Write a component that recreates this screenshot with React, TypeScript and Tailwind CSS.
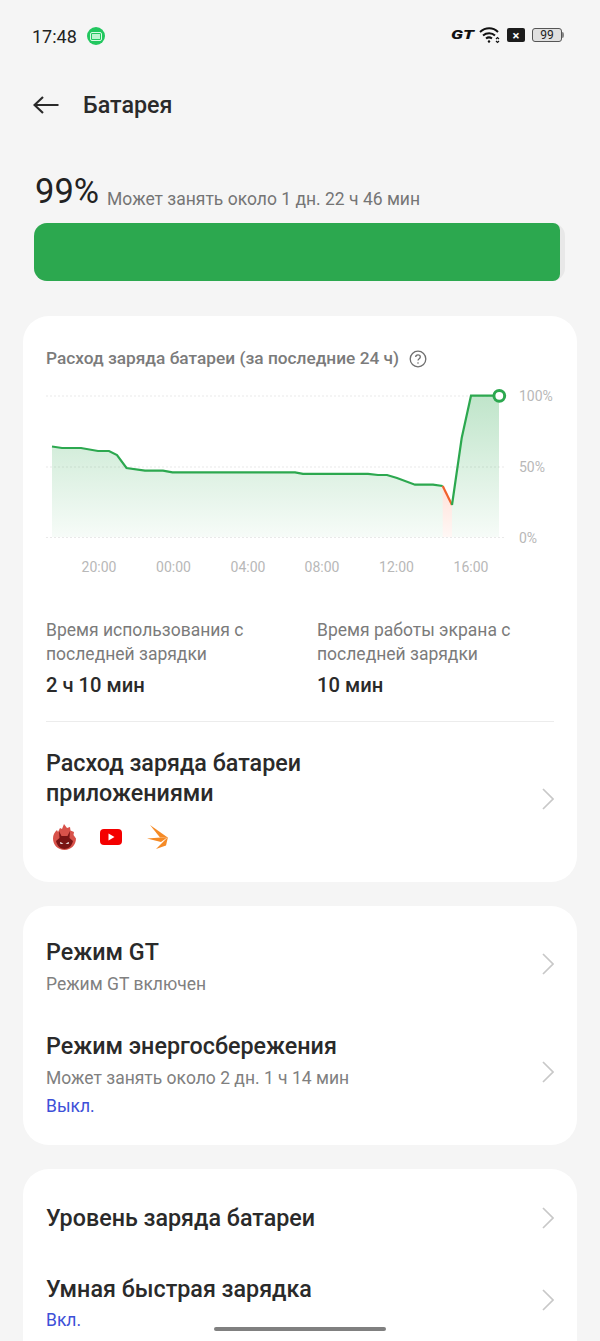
const lineGreen1 =
  "52,446.5 62,448 81,448 98,451 109,451 117,455 126.5,468 145,470.7 163,470.7 172.5,472.3 295,472.3 303,473.8 368,473.8 378,475 387,475 397,478 415,484.7 433,484.7 442.7,486";
const lineGreen2 = "452,505 461.7,438 471,395.7 499,395.7";

function Chevron({ className }: { className?: string }) {
  return (
    <svg width="12" height="22" viewBox="0 0 12 22" fill="none" stroke="#c8c8c8" strokeWidth="1.7" className={`shrink-0 ${className ?? ""}`}>
      <path d="M1 1l10 10L1 21" />
    </svg>
  );
}

function Chart() {
  return (
    <svg width="510" height="190" viewBox="46 385 510 190" className="block">
      <defs>
        <linearGradient id="fill" x1="0" y1="396" x2="0" y2="537" gradientUnits="userSpaceOnUse">
          <stop offset="0" stopColor="#2ca84f" stopOpacity="0.3" />
          <stop offset="1" stopColor="#2ca84f" stopOpacity="0.04" />
        </linearGradient>
        <linearGradient id="red" x1="0" y1="486" x2="0" y2="537" gradientUnits="userSpaceOnUse">
          <stop offset="0" stopColor="#ff6a3d" stopOpacity="0.2" />
          <stop offset="1" stopColor="#ff6a3d" stopOpacity="0.05" />
        </linearGradient>
      </defs>
      {[396, 467, 537.5].map((y) => (
        <line key={y} x1="46" x2="506" y1={y} y2={y} stroke="#e9e9e9" strokeDasharray="2 2" />
      ))}
      <polygon points={`${lineGreen1} 442.7,537 52,537`} fill="url(#fill)" />
      <polygon points="442.7,486 452,505 452,537 442.7,537" fill="url(#red)" />
      <polygon points={`${lineGreen2} 499,537 452,537`} fill="url(#fill)" />
      <polyline points={lineGreen1} fill="none" stroke="#2ca84f" strokeWidth="2.2" />
      <polyline points="442.7,486 452,505" fill="none" stroke="#f0622d" strokeWidth="2.2" />
      <polyline points={lineGreen2} fill="none" stroke="#2ca84f" strokeWidth="2.2" />
      <circle cx="499.3" cy="395.8" r="5.4" fill="#fff" stroke="#2ca84f" strokeWidth="3" />
      <g fontSize="14" fill="#b8b8b8" fontFamily="Roboto, sans-serif">
        <text x="519" y="401">100%</text>
        <text x="519" y="472">50%</text>
        <text x="519" y="543">0%</text>
        <text x="99" y="572" textAnchor="middle">20:00</text>
        <text x="173.5" y="572" textAnchor="middle">00:00</text>
        <text x="248" y="572" textAnchor="middle">04:00</text>
        <text x="322" y="572" textAnchor="middle">08:00</text>
        <text x="396.5" y="572" textAnchor="middle">12:00</text>
        <text x="471" y="572" textAnchor="middle">16:00</text>
      </g>
    </svg>
  );
}

function AppIcons() {
  return (
    <div className="flex items-center mt-[16px] ml-[7px] h-[26px]">
      {/* antutu */}
      <svg width="23" height="26" viewBox="0 0 23 26">
        <path d="M11 0l3 4 3-1 .5 3.5L21 8l-.5 3 2.5 3.500C23 21 18 26 11.500 26S0 21 0 14.500C0 11 1.500 8 4 6l1 2 2-4 2 1z" fill="#d8524a" />
        <path d="M6 7l2.500 5h6L17 7l-.5 7 3.500 3c-1 5-4.500 8-8.500 8S4 22 3 17l3.500-3z" fill="#7a1414" />
        <path d="M7 18l3.500 1.500L7.500 20zM16 18l-3.500 1.500 3 .5z" fill="#fff" />
      </svg>
      <svg width="22" height="16" viewBox="0 0 22 16" className="ml-[24px]">
        <rect width="22" height="16" rx="4" fill="#f40000" />
        <path d="M8.500 4.500l6 3.500-6 3.500z" fill="#fff" />
      </svg>
      <svg width="21" height="24" viewBox="0 0 21 24" fill="#f58a25" className="ml-[25px]">
        <path d="M3 0l17 12-7 .5z" />
        <path d="M0 13.500l21-1.500-7 5z" />
        <path d="M9 24l12-12-2 8.500z" />
      </svg>
    </div>
  );
}

function Row({ title, sub, note, className }: { title: string; sub?: string; note?: string; className?: string }) {
  return (
    <div className={`flex items-center justify-between ${className ?? ""}`}>
      <div>
        <div className="text-[23.3px] leading-[28px] font-medium text-[#2a2a2a]">{title}</div>
        {sub && <div className="text-[17.5px] leading-[22px] mt-[7px] text-[#808080]">{sub}</div>}
        {note && <div className="text-[17.5px] leading-[22px] mt-[6px] text-[#3d50d8]">{note}</div>}
      </div>
      <Chevron className={sub || note ? "mb-[6px]" : ""} />
    </div>
  );
}

export default function App() {
  return (
    <div className="relative w-[600px] h-[1341px] overflow-hidden bg-[#f5f5f5] font-['Roboto',sans-serif]">
      {/* status bar */}
      <div className="h-[72px] px-[32px] pt-[25px] flex items-start justify-between">
        <div className="flex items-center gap-[10px] h-[22px]">
          <span className="text-[18px] text-[#222]">17:48</span>
          <span className="w-[18px] h-[18px] rounded-full bg-[#22c75f] flex items-center justify-center">
            <span className="w-[12px] h-[9px] rounded-[2px] bg-[#22c75f] border border-[#d8fbe4] flex items-center justify-center">
              <span className="w-[8px] h-[5px] bg-[#bdf5d0]" />
            </span>
          </span>
        </div>
        <div className="flex items-center h-[22px] mr-[4px] -mt-[1px]">
          <span className="inline-block w-[21px] text-center text-[12px] font-black italic text-[#111] scale-x-[1.5]">GT</span>
          <svg width="22" height="18" viewBox="0 0 22 18" fill="none" stroke="#111" strokeWidth="2" className="ml-[6px]">
            <path d="M1 6c5.500-5 13-5 18 0" />
            <path d="M4 9.500c3.500-3 9-3 12 0" />
            <path d="M7 12.500c1.700-1.300 4.300-1.300 6 0" />
            <circle cx="10" cy="15.500" r="1.200" fill="#111" stroke="none" />
            <path d="M17 13l1.500-1.500L20 13M17 15l1.500 1.500L20 15" strokeWidth="1.2" />
          </svg>
          <span className="ml-[6px] w-[18px] h-[14px] rounded-[2px] bg-[#1c1c1c] flex items-center justify-center text-white text-[13px] font-bold leading-none">×</span>
          <span className="ml-[7px] w-[30px] h-[14px] rounded-[3px] border border-[#555] bg-[#e0e0e0] flex items-center justify-center text-[12px] leading-none text-[#222]">99</span>
          <span className="w-[2px] h-[6px] bg-[#888] rounded-r-sm" />
        </div>
      </div>

      {/* header */}
      <div className="h-[66px] px-[33px] flex items-center">
        <svg width="26" height="18" viewBox="0 0 26 18" fill="none" stroke="#2a2a2a" strokeWidth="2.2">
          <path d="M1.500 9H25.500M10 1L1.500 9l8.500 8" />
        </svg>
        <span className="ml-[24px] text-[23.3px] font-medium text-[#2a2a2a]">Батарея</span>
      </div>

      {/* battery */}
      <div className="mt-[31px] mx-[35px] flex items-baseline h-[44px]">
        <span className="text-[34.5px] leading-[44px] text-[#222]">99%</span>
        <span className="ml-[8px] text-[17.5px] text-[#757575] translate-y-[2px]">Может занять около 1 дн. 22 ч 46 мин</span>
      </div>
      <div className="mt-[10px] ml-[34px] w-[531px] h-[58px] rounded-[13px] bg-[#e8e8e8]">
        <div className="w-[526px] h-full rounded-l-[13px] rounded-r-[7px] bg-[#2ca84f]" />
      </div>

      {/* usage card */}
      <div className="mt-[35px] mx-[23px] h-[566px] rounded-[26px] bg-white px-[23px] pt-[31px]">
        <div className="flex items-center h-[24px] text-[17.3px] font-medium text-[#7b7b7b]">
          Расход заряда батареи (за последние 24 ч)
          <svg className="ml-[10px]" width="18" height="18" viewBox="0 0 18 18" fill="none" stroke="#6f6f6f" strokeWidth="1.3">
            <circle cx="9" cy="9" r="7.8" />
            <path d="M6.700 7c0-1.400 1-2.200 2.300-2.200s2.300.9 2.300 2.100c0 1.800-2.300 1.800-2.300 3.600" />
            <circle cx="9" cy="13" r=".8" fill="#6f6f6f" stroke="none" />
          </svg>
        </div>
        <div className="mt-[14px]">
          <Chart />
        </div>
        <div className="mt-[43px] grid grid-cols-[271px_1fr]">
          <div>
            <div className="text-[17.5px] leading-[24px] text-[#7b7b7b]">Время использования с<br />последней зарядки</div>
            <div className="mt-[6px] text-[20.2px] leading-[26px] font-medium text-[#2a2a2a]">2 ч 10 мин</div>
          </div>
          <div>
            <div className="text-[17.5px] leading-[24px] text-[#7b7b7b]">Время работы экрана с<br />последней зарядки</div>
            <div className="mt-[6px] text-[20.2px] leading-[26px] font-medium text-[#2a2a2a]">10 мин</div>
          </div>
        </div>
        <div className="mt-[23px] h-px bg-[#ececec]" />
        <div className="mt-[26px] flex items-center justify-between">
          <div>
            <div className="text-[23.3px] leading-[30px] font-medium text-[#2a2a2a]">Расход заряда батареи<br />приложениями</div>
            <AppIcons />
          </div>
          <Chevron />
        </div>
      </div>

      {/* mode card */}
      <div className="mt-[24px] mx-[23px] h-[239px] rounded-[26px] bg-white px-[23px] pt-[32px]">
        <Row title="Режим GT" sub="Режим GT включен" />
        <Row className="mt-[37px]" title="Режим энергосбережения" sub="Может занять около 2 дн. 1 ч 14 мин" note="Выкл." />
      </div>

      {/* charge card */}
      <div className="mt-[24px] mx-[23px] h-[200px] rounded-[26px] bg-white px-[23px] pt-[35px]">
        <Row title="Уровень заряда батареи" />
        <Row className="mt-[43px]" title="Умная быстрая зарядка" note="Вкл." />
      </div>

      <div className="absolute left-[214px] bottom-[10px] w-[172px] h-[4px] rounded-full bg-[#808080]" />
    </div>
  );
}
